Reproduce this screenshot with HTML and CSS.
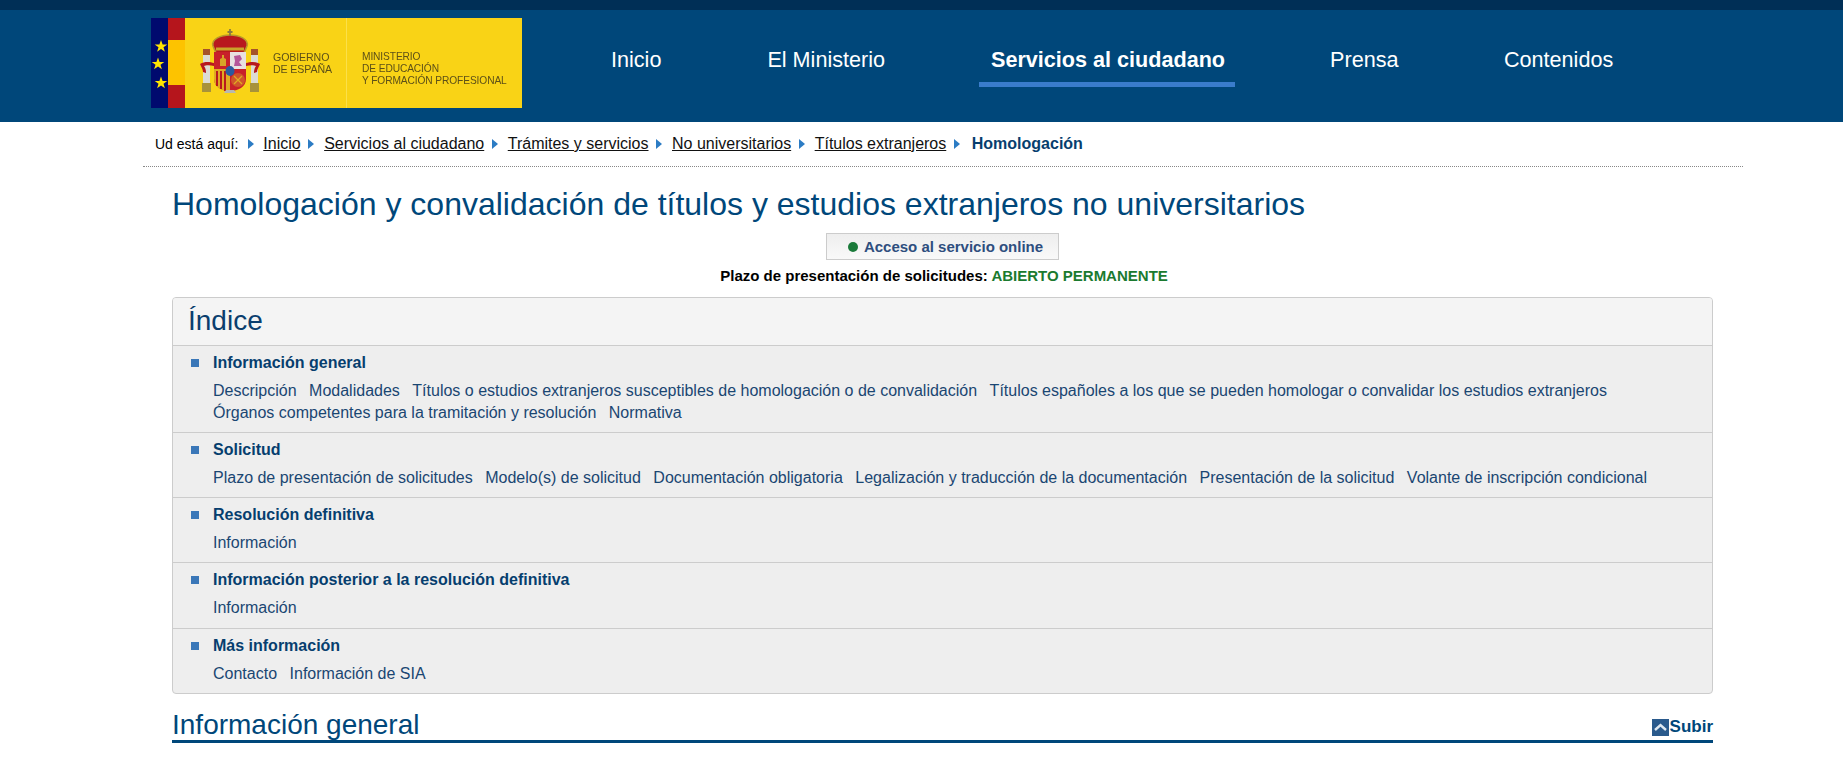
FILE: index.html
```html
<!DOCTYPE html>
<html lang="es">
<head>
<meta charset="utf-8">
<title>Homologación y convalidación</title>
<link rel="stylesheet" href="styles.css">
</head>
<body>
<div class="topbar"></div>
<header class="header">
  <div class="logo">
    <div class="eu">
      <svg width="17" height="90" viewBox="0 0 17 90">
        <polygon fill="#ffe500" points="0,-6.500 1.600,-2 6.300,-2 2.500,0.800 3.900,5.300 0,2.600 -3.900,5.300 -2.500,0.800 -6.300,-2 -1.600,-2" transform="translate(10 28.500)"/>
        <polygon fill="#ffe500" points="0,-6.500 1.600,-2 6.300,-2 2.500,0.800 3.900,5.300 0,2.600 -3.900,5.300 -2.500,0.800 -6.300,-2 -1.600,-2" transform="translate(7 46)"/>
        <polygon fill="#ffe500" points="0,-6.500 1.600,-2 6.300,-2 2.500,0.800 3.900,5.300 0,2.600 -3.900,5.300 -2.500,0.800 -6.300,-2 -1.600,-2" transform="translate(10 65)"/>
      </svg>
    </div>
    <div class="flag"></div>
    <div class="shield-area">
      <svg class="shield" width="62" height="66" viewBox="0 0 62 66">
        <rect x="4" y="27" width="7" height="29" fill="#dcdcd4"/>
        <rect x="52" y="27" width="7" height="29" fill="#dcdcd4"/>
        <rect x="4" y="21" width="7" height="6" fill="#a5532a"/>
        <rect x="52" y="21" width="7" height="6" fill="#a5532a"/>
        <rect x="3" y="55" width="9" height="9" fill="#a8923a"/>
        <rect x="51" y="55" width="9" height="9" fill="#a8923a"/>
        <path d="M14 18c-2-7 8-11 17-11s19 4 17 11l-3 7H17z" fill="#b8191e" stroke="#b89a2a" stroke-width="1.600"/>
        <path d="M17 21h28" stroke="#c9a52a" stroke-width="3"/>
        <path d="M31 1v7M28.500 4h5" stroke="#8a7a40" stroke-width="1.800"/>
        <path d="M15 24h32v27c0 8-8 12-16 12s-16-4-16-12z" fill="#c8202a"/>
        <rect x="31" y="24" width="16" height="17" fill="#e8e0e2"/>
        <path d="M35 28l6-1 2 4-3 3 3 4h-8l1-5z" fill="#b5559a"/>
        <path d="M21 38v-7l2-1v-3h2v3l2 1v7z" fill="#d8a528"/>
        <path d="M15 41h16v22c-9 0-16-4-16-12z" fill="#e0aa22"/>
        <path d="M18 43v15M22 43v18M26 43v20" stroke="#b8191e" stroke-width="2"/>
        <circle cx="39" cy="52" r="7" fill="#d0552a"/>
        <path d="M35 48l8 8M43 48l-8 8" stroke="#e0aa22" stroke-width="1.200"/>
        <ellipse cx="31" cy="43" rx="4.500" ry="5" fill="#2a5aa0"/>
        <path d="M27 62h8l2 3h-12z" fill="#b8b8b0"/>
        <path d="M1 36c5-3 10-2 14-1v3c-4-1-8-1-10 0 2 3 2 5 2 7l-3-1c0-3-2-5-3-8zM61 36c-5-3-10-2-14-1v3c4-1 8-1 10 0-2 3-2 5-2 7l3-1c0-3 2-5 3-8z" fill="#b8191e"/>
      </svg>
      <div class="gov">GOBIERNO<br>DE ESPAÑA</div>
    </div>
    <div class="min">MINISTERIO<br>DE EDUCACIÓN<br>Y FORMACIÓN PROFESIONAL</div>
  </div>
  <nav class="nav">
    <a class="nav-item">Inicio</a>
    <a class="nav-item">El Ministerio</a>
    <a class="nav-item active">Servicios al ciudadano</a>
    <a class="nav-item">Prensa</a>
    <a class="nav-item">Contenidos</a>
  </nav>
</header>

<div class="crumbs">
  <span class="crumb-label">Ud está aquí:</span><i class="tri tri-first"></i>
  <a>Inicio</a><i class="tri"></i>
  <a>Servicios al ciudadano</a><i class="tri"></i>
  <a>Trámites y servicios</a><i class="tri"></i>
  <a>No universitarios</a><i class="tri"></i>
  <a>Títulos extranjeros</a><i class="tri"></i>
  <b>Homologación</b>
</div>

<main class="main">
  <h1 class="title">Homologación y convalidación de títulos y estudios extranjeros no universitarios</h1>
  <div class="access-row"><a class="access"><i class="dot"></i>Acceso al servicio online</a></div>
  <p class="plazo">Plazo de presentación de solicitudes: <span>ABIERTO PERMANENTE</span></p>

  <section class="index">
    <h2 class="index-head">Índice</h2>
    <div class="group g1">
      <h3><i class="sq"></i>Información general</h3>
      <p class="links"><a>Descripción</a><a>Modalidades</a><a>Títulos o estudios extranjeros susceptibles de homologación o de convalidación</a><a>Títulos españoles a los que se pueden homologar o convalidar los estudios extranjeros</a><a>Órganos competentes para la tramitación y resolución</a><a>Normativa</a></p>
    </div>
    <div class="group">
      <h3><i class="sq"></i>Solicitud</h3>
      <p class="links"><a>Plazo de presentación de solicitudes</a><a>Modelo(s) de solicitud</a><a>Documentación obligatoria</a><a>Legalización y traducción de la documentación</a><a>Presentación de la solicitud</a><a>Volante de inscripción condicional</a></p>
    </div>
    <div class="group">
      <h3><i class="sq"></i>Resolución definitiva</h3>
      <p class="links"><a>Información</a></p>
    </div>
    <div class="group g4">
      <h3><i class="sq"></i>Información posterior a la resolución definitiva</h3>
      <p class="links"><a>Información</a></p>
    </div>
    <div class="group">
      <h3><i class="sq"></i>Más información</h3>
      <p class="links"><a>Contacto</a><a>Información de SIA</a></p>
    </div>
  </section>

  <div class="section-head">
    <h2>Información general</h2>
    <a class="up"><svg width="17" height="17" viewBox="0 0 17 17"><rect width="17" height="17" fill="#2a5a8c"/><path d="M3 11l5.500-5 5.500 5" fill="none" stroke="#dfe8f0" stroke-width="2.400"/></svg>Subir</a>
  </div>
</main>
</body>
</html>
```
FILE: styles.css
```css
* { box-sizing: border-box; }
html, body { margin: 0; padding: 0; }
body { font-family: "Liberation Sans", Arial, sans-serif; background: #fff; color: #000; height: 767px; overflow: hidden; }
a { color: inherit; }

.topbar { height: 10px; background: #002f56; }
.header { height: 112px; background: #00477a; display: flex; align-items: flex-start; padding: 8px 0 0 151px; }
.logo { width: 371px; height: 90px; background: #f9d316; display: flex; flex: none; }
.eu { width: 17px; background: #000a6e; flex: none; }
.eu svg { display: block; }
.flag { width: 17px; background: linear-gradient(#b5151c 0 25%, #fdc300 25% 75%, #b5151c 75%); flex: none; }
.shield-area { width: 162px; flex: none; display: flex; align-items: center; border-right: 1px solid #fbe04a; padding-left: 14px; gap: 12px; }
.shield { flex: none; margin-top: -4px; filter: blur(0.4px); }
.gov, .min { color: #5d5018; letter-spacing: -0.100px; filter: blur(0.3px); }
.gov { font-size: 10.600px; line-height: 12px; margin-top: -1px; }
.min { font-size: 10.200px; line-height: 12px; padding: 33px 0 0 15px; }

.nav { display: flex; margin-left: 77px; font-size: 21.600px; color: #fff; }
.nav-item { display: block; height: 69px; padding: 27px 12px 0; margin-right: 82px; border-bottom: 5px solid transparent; line-height: 30px; white-space: nowrap; }
.nav-item.active { font-weight: bold; padding-right: 10px; margin-right: 83px; border-bottom-color: #3a7ccb; }
.nav-item.active + .nav-item { margin-right: 81.500px; }

.crumbs { margin: 0 100px 0 143px; height: 45px; border-bottom: 1px dotted #888; display: flex; align-items: center; padding-left: 12px; font-size: 16px; }
.crumb-label { font-size: 14px; }
.crumbs a { text-decoration: underline; color: #111; }
.crumbs b { margin-left: 2px; color: #063e6e; }
.tri { width: 0; height: 0; border-left: 6px solid #2c7cc4; border-top: 5px solid transparent; border-bottom: 5px solid transparent; margin: 0 10px 0 7.500px; }
.tri-first { margin: 0 9px 0 10px; }

.main { margin: 0 130px 0 172px; }
.title { margin: 0; padding-top: 17px; height: 66px; font-size: 32px; line-height: 40px; font-weight: normal; color: #00477a; }
.access-row { display: flex; justify-content: center; }
.access { display: flex; align-items: center; justify-content: center; width: 233px; height: 27px; padding-left: 6px; font-size: 15px; font-weight: bold; color: #2e4e7e; border: 1px solid #ccc; background: linear-gradient(#eee, #f9f9f9); }
.dot { width: 10px; height: 10px; border-radius: 50%; background: #1a7a3a; margin-right: 6px; }
.plazo { margin: 7px 0 0; padding-left: 3px; font-size: 15px; line-height: 18px; font-weight: bold; text-align: center; }
.plazo span { color: #1b7a2f; }

.index { margin-top: 12px; border: 1px solid #ccc; border-radius: 4px; background: #eee; height: 397px; overflow: hidden; }
.index-head { margin: 0; height: 47px; padding-left: 15px; font-size: 28px; line-height: 45px; font-weight: normal; color: #0a3e6e; background: #f4f4f4; }
.group { border-top: 1px solid #ccc; height: 65px; padding: 7px 20px 0 18px; }
.g1 { height: 87px; }
.g4 { height: 66px; }
.group h3 { margin: 0; display: flex; align-items: center; font-size: 16px; line-height: 20px; font-weight: bold; color: #063e6e; }
.sq { width: 8px; height: 8px; background: #3a77b8; margin-right: 14px; flex: none; }
.links { margin: 7px 0 0 22px; font-size: 16px; line-height: 22px; color: #1a4672; }
.links a { margin-right: 12.500px; display: inline-block; }

.section-head { margin-top: 14px; height: 35px; border-bottom: 3px solid #00477a; display: flex; justify-content: space-between; align-items: flex-end; }
.section-head h2 { margin: 0; font-size: 28px; line-height: 30px; font-weight: normal; color: #00477a; }
.up { display: flex; align-items: center; gap: 1px; font-size: 17px; line-height: 20px; font-weight: bold; color: #00477a; padding-bottom: 3px; }
```
